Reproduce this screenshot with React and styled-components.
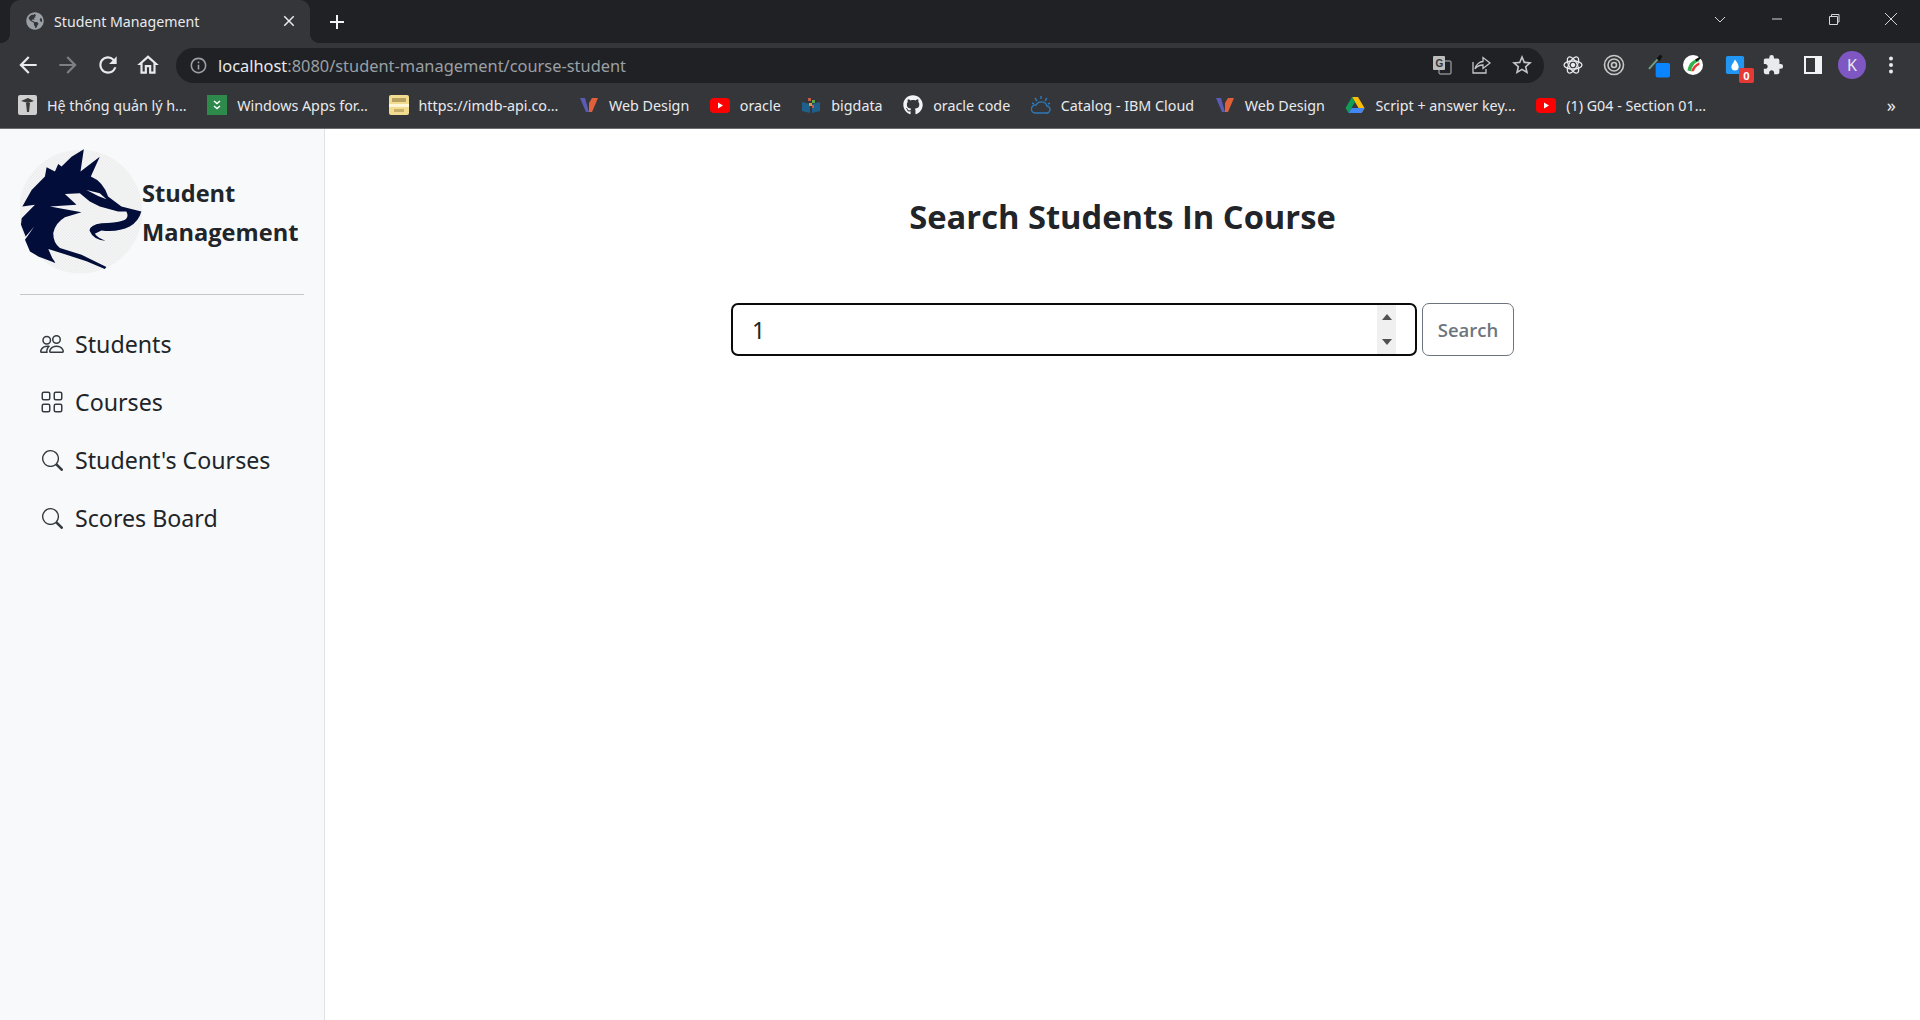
import React from "react";
import styled, { createGlobalStyle } from "styled-components";
import { BsPeople, BsGrid, BsSearch } from "react-icons/bs";
import {
  MdArrowBack,
  MdArrowForward,
  MdRefresh,
  MdOutlineHome,
  MdClose,
  MdAdd,
  MdInfoOutline,
  MdStarBorder,
  MdExtension,
} from "react-icons/md";
import { FaGithub, FaGlobeAmericas } from "react-icons/fa";

const GlobalStyle = createGlobalStyle`
  html, body { margin: 0; padding: 0; height: 100%; background: #fff; }
  body { font-family: "Noto Sans", "Open Sans", sans-serif; overflow: hidden; }
`;

const Page = styled.div`
  display: flex;
  flex-direction: column;
  height: 1020px;
`;

const TabStrip = styled.div`
  display: flex;
  align-items: flex-end;
  height: 43px;
  background: #202124;
  padding-left: 10px;
`;
const Tab = styled.div`
  position: relative;
  display: flex;
  align-items: center;
  width: 300px;
  height: 43px;
  box-sizing: border-box;
  padding: 0 12px 1px 16px;
  background: #35363a;
  border-radius: 10px 10px 0 0;
  color: #e8eaed;
  font-size: 14.2px;
  &::before,
  &::after {
    content: "";
    position: absolute;
    bottom: 0;
    width: 10px;
    height: 10px;
  }
  &::before {
    left: -10px;
    background: radial-gradient(circle at 0 0, #202124 10px, #35363a 10.5px);
  }
  &::after {
    right: -10px;
    background: radial-gradient(circle at 100% 0, #202124 10px, #35363a 10.5px);
  }
`;
const TabTitle = styled.span`
  flex: 1;
  margin-left: 10px;
`;
const NewTab = styled.div`
  display: flex;
  align-items: center;
  justify-content: center;
  width: 26px;
  height: 42px;
  margin-left: 14px;
  color: #f1f3f4;
  font-size: 24px;
`;
const WindowControls = styled.div`
  display: flex;
  align-items: center;
  gap: 43px;
  margin-left: auto;
  height: 37px;
  padding-bottom: 6px;
  padding-right: 22px;
  color: #d5d6d8;
`;

const ToolBar = styled.div`
  display: flex;
  align-items: center;
  height: 42px;
  box-sizing: border-box;
  background: #35363a;
  padding: 2px 0 0 15px;
  color: #e8eaed;
`;
const NavIcons = styled.div`
  display: flex;
  gap: 14px;
  align-items: center;
  font-size: 26px;
`;
const NavIcon = styled.span`
  display: flex;
  color: ${(p) => (p.$muted ? "#7d7f83" : "#e8eaed")};
`;
const UrlBar = styled.div`
  display: flex;
  align-items: center;
  width: 1368px;
  height: 35px;
  margin-left: 15px;
  padding: 0 10px 0 13px;
  box-sizing: border-box;
  border-radius: 18px;
  background: #202124;
  font-size: 16.4px;
  color: #9aa0a6;
`;
const UrlHost = styled.span`
  color: #e8eaed;
  margin-left: 10px;
`;
const UrlActions = styled.div`
  display: flex;
  align-items: center;
  gap: 18px;
  margin-left: auto;
  color: #c4c7c9;
`;
const Extensions = styled.div`
  display: flex;
  align-items: center;
  margin-left: 18px;
`;
const Avatar = styled.div`
  width: 28px;
  height: 28px;
  margin-left: 14px;
  border-radius: 50%;
  background: #7e57c2;
  color: #e8eaed;
  font-size: 16px;
  display: flex;
  align-items: center;
  justify-content: center;
`;
const Badge = styled.span`
  position: absolute;
  right: -8px;
  bottom: -7px;
  width: 15px;
  height: 15px;
  border-radius: 2px;
  background: #e53935;
  color: #fff;
  font-size: 11px;
  font-weight: 700;
  line-height: 15px;
  text-align: center;
`;
const ExtIcon = styled.span`
  position: relative;
  display: flex;
  flex: none;
  width: 22px;
  height: 22px;
  margin-left: ${(p) => p.$gap || 0}px;
  align-items: center;
  justify-content: center;
  color: #e8eaed;
`;

const BookmarkBar = styled.div`
  display: flex;
  align-items: center;
  height: 44px;
  box-sizing: border-box;
  padding: 0 24px 3px 17px;
  background: #35363a;
  border-bottom: 1px solid #6b6c6f;
  color: #e8eaed;
  font-size: 14.3px;
`;
const Bookmark = styled.div`
  display: flex;
  align-items: center;
  gap: 10px;
  margin-right: 20.6px;
  white-space: nowrap;
`;
const BookmarkGlyph = styled.span`
  display: flex;
  width: 20px;
  height: 20px;
  align-items: center;
  justify-content: center;
`;
const Overflow = styled.span`
  margin-left: auto;
  font-size: 18px;
`;

const Body = styled.div`
  display: flex;
  flex: 1;
`;
const Sidebar = styled.aside`
  width: 325px;
  box-sizing: border-box;
  background: #f8f9fa;
  border-right: 1px solid #dee2e6;
  padding: 19px 20px 0;
`;
const Brand = styled.div`
  display: flex;
  align-items: center;
  height: 127px;
`;
const BrandTitle = styled.div`
  font-family: "Open Sans", sans-serif;
  font-weight: 700;
  font-size: 23.6px;
  line-height: 39px;
  padding-top: 3px;
  margin-left: -1px;
  color: #212529;
`;
const Rule = styled.hr`
  border: 0;
  border-top: 1px solid #c5c7c9;
  margin: 19px 0 29px;
`;
const NavList = styled.nav`
  display: flex;
  flex-direction: column;
  gap: 18px;
  padding-left: 20px;
`;
const NavItem = styled.a`
  display: flex;
  align-items: center;
  gap: 11px;
  height: 40px;
  font-size: 23.2px;
  color: #212529;
`;
const NavGlyph = styled.span`
  display: flex;
  width: 24px;
  align-items: center;
  justify-content: center;
  color: #343a40;
  font-size: ${(p) => p.$size}px;
`;

const Main = styled.main`
  flex: 1;
  display: flex;
  flex-direction: column;
  align-items: center;
  padding-top: 65px;
`;
const Heading = styled.h1`
  margin: 0;
  font-family: "Open Sans", sans-serif;
  font-size: 32.7px;
  line-height: 46px;
  font-weight: 700;
  color: #212529;
`;
const SearchForm = styled.form`
  display: flex;
  gap: 5px;
  margin-top: 63px;
  height: 53px;
`;
const InputBox = styled.div`
  display: flex;
  width: 686px;
  box-sizing: border-box;
  border: 2px solid #0b0b0b;
  border-radius: 7px;
  padding-right: 19px;
  background: #fff;
`;
const NumberInput = styled.input`
  flex: 1;
  border: 0;
  outline: 0;
  padding: 0 0 0 19px;
  font: 23px "Noto Sans", sans-serif;
  color: #212529;
  background: transparent;
`;
const Spinner = styled.div`
  display: flex;
  flex-direction: column;
  justify-content: space-between;
  align-items: center;
  width: 19px;
  padding: 9px 0;
  box-sizing: border-box;
  background: #f0f0f0;
`;
const Arrow = styled.span`
  width: 0;
  height: 0;
  border-left: 5.5px solid transparent;
  border-right: 5.5px solid transparent;
  border-${(p) => (p.$down ? "top" : "bottom")}: 6px solid #505050;
`;
const SearchButton = styled.button`
  width: 92px;
  border: 1px solid #6c757d;
  border-radius: 7px;
  background: #fff;
  color: #6c757d;
  font: 600 18.5px "Open Sans", sans-serif;
  padding: 0;
`;

// traced over the logo at 3x
const Wolf = () => (
  <svg width="123" height="127" viewBox="15 15 370 380" style={{ flex: "none" }}>
    <defs>
      <pattern id="chk" width="9" height="9" patternUnits="userSpaceOnUse">
        <rect width="4.5" height="4.5" fill="#e9e9ea" />
        <rect x="4.5" y="4.5" width="4.5" height="4.5" fill="#e9e9ea" />
      </pattern>
    </defs>
    <circle cx="197" cy="205" r="186" fill="url(#chk)" />
    <path
      fill="#020d3a"
      d="M207 18 L197 85 L255 40 L228 100 Q265 115 280 160 L320 190 L380 205 Q372 235 345 250 Q310 268 260 262 L240 272 Q250 285 272 293 Q235 290 224 262 Q225 245 260 240 Q300 240 325 232 Q345 225 335 205 L310 205 L255 190 L225 175 L195 150 L150 152 L185 185 L105 190 L200 207 L150 222 Q120 240 115 270 Q115 300 135 315 L200 335 L275 372 L270 378 L215 355 L155 335 L100 318 L112 345 L122 360 L70 340 L45 325 L30 290 L58 250 L32 280 L18 245 L20 225 L60 185 L22 190 L50 140 L90 100 L95 72 L120 85 L130 62 L140 70 L170 40 Z"
    />
    <path fill="#f4f5f7" d="M215 140 L255 150 L275 168 L250 158 Z" />
  </svg>
);

const YouTube = () => (
  <svg width="20" height="15" viewBox="0 0 20 15">
    <rect width="20" height="15" rx="4" fill="#f00" />
    <path d="M8 4.5 L13 7.5 L8 10.5 Z" fill="#fff" />
  </svg>
);

const WebDesign = () => (
  <svg width="20" height="18" viewBox="0 0 20 18">
    <path d="M1 2 L6 2 L10 16 L7 16 Z" fill="#5b5bb5" />
    <path d="M10 7 L13 2 L19 2 L13 16 L10 16 Z" fill="#e0603a" />
  </svg>
);

const bookmarks = [
  {
    name: "Hệ thống quản lý h...",
    icon: (
      <svg width="19" height="20" viewBox="0 0 19 20">
        <rect width="19" height="20" rx="2" fill="#cfcfcf" />
        <path d="M3 6 L10 3 L16 6 L10 8 Z M8 8 L12 8 L11 17 L9 17 Z" fill="#3a3a3a" />
      </svg>
    ),
  },
  {
    name: "Windows Apps for...",
    icon: (
      <svg width="20" height="20" viewBox="0 0 20 20">
        <rect width="20" height="20" fill="#2d8a4b" />
        <path d="M7 6 L10 8.5 L13 6 M7 11 L10 13.5 L13 11" stroke="#fff" strokeWidth="1.6" fill="none" />
      </svg>
    ),
  },
  {
    name: "https://imdb-api.co...",
    icon: (
      <svg width="20" height="20" viewBox="0 0 20 20">
        <rect width="20" height="20" rx="2" fill="#f2dc8f" />
        <rect y="9" width="20" height="3" fill="#fff6d8" />
        <rect x="3" y="3" width="14" height="4" fill="#b8a060" />
        <rect x="5" y="14" width="10" height="3" fill="#c9b06a" />
      </svg>
    ),
  },
  { name: "Web Design", icon: <WebDesign /> },
  { name: "oracle", icon: <YouTube /> },
  {
    name: "bigdata",
    icon: (
      <svg width="20" height="18" viewBox="0 0 20 18">
        <path d="M1 6 L9 8 V17 L1 15 Z M19 6 L11 8 V17 L19 15 Z" fill="#1f5f8b" />
        <rect x="7" y="2" width="3" height="3" fill="#c65a4a" />
        <rect x="11" y="4" width="3" height="3" fill="#5aa84a" />
        <rect x="8" y="7" width="3" height="3" fill="#d9a03a" />
        <rect x="11" y="9" width="2" height="3" fill="#c65a4a" />
      </svg>
    ),
  },
  { name: "oracle code", icon: <FaGithub size={20} color="#f1f3f4" /> },
  {
    name: "Catalog - IBM Cloud",
    icon: (
      <svg width="20" height="20" viewBox="0 0 20 20" fill="none" stroke="#2f78b7" strokeWidth="1.4">
        <path d="M4 18 H15 A3.5 3.5 0 0 0 16 11 A6 6 0 0 0 5 10 A4 4 0 0 0 4 18 Z" />
        <path d="M4 3 L6 6 M10 1 L10 4 M16 3 L14 6 M1 8 L3 9 M19 8 L17 9" />
      </svg>
    ),
  },
  { name: "Web Design", icon: <WebDesign /> },
  {
    name: "Script + answer key...",
    icon: (
      <svg width="20" height="18" viewBox="0 0 20 18">
        <path d="M7 1 L13 1 L19.5 12 L16.5 17 Z" fill="#fbbc04" />
        <path d="M7 1 L0.5 12 L3.5 17 L10 6 Z" fill="#0f9d58" />
        <path d="M3.5 17 L16.5 17 L19.5 12 L6.5 12 Z" fill="#4285f4" />
      </svg>
    ),
  },
  { name: "(1) G04 - Section 01...", icon: <YouTube /> },
];

const nav = [
  { label: "Students", Icon: BsPeople, size: 24 },
  { label: "Courses", Icon: BsGrid, size: 26 },
  { label: "Student's Courses", Icon: BsSearch, size: 21 },
  { label: "Scores Board", Icon: BsSearch, size: 21 },
];

export default function App() {
  return (
    <Page>
      <GlobalStyle />
      <TabStrip>
        <Tab>
          <FaGlobeAmericas size={18} color="#9aa0a6" />
          <TabTitle>Student Management</TabTitle>
          <MdClose size={18} />
        </Tab>
        <NewTab>
          <MdAdd />
        </NewTab>
        <WindowControls>
          <svg width="14" height="14" viewBox="0 0 14 14"><path d="M2 5 L7 10 L12 5" fill="none" stroke="currentColor" /></svg>
          <svg width="14" height="14" viewBox="0 0 14 14"><path d="M2 7 H12" stroke="currentColor" /></svg>
          <svg width="14" height="14" viewBox="0 0 14 14"><path d="M2.5 4.5 H10.5 V12.5 H2.5 Z M4.5 4.5 V2.5 H12 V10 H10.5" fill="none" stroke="currentColor" /></svg>
          <svg width="14" height="14" viewBox="0 0 14 14"><path d="M1 1 L13 13 M13 1 L1 13" stroke="currentColor" /></svg>
        </WindowControls>
      </TabStrip>
      <ToolBar>
        <NavIcons>
          <NavIcon><MdArrowBack /></NavIcon>
          <NavIcon $muted><MdArrowForward /></NavIcon>
          <NavIcon><MdRefresh /></NavIcon>
          <NavIcon><MdOutlineHome /></NavIcon>
        </NavIcons>
        <UrlBar>
          <MdInfoOutline size={19} />
          <UrlHost>localhost</UrlHost>:8080/student-management/course-student
          <UrlActions>
            <svg width="20" height="20" viewBox="0 0 20 20">
              <rect x="7" y="6" width="12" height="13" rx="1" fill="#202124" stroke="#bdbdbd" />
              <rect x="1" y="1" width="12" height="14" rx="1" fill="#bdbdbd" />
              <text x="3.5" y="12" fontSize="10" fontWeight="700" fontFamily="Liberation Sans, sans-serif" fill="#333">G</text>
            </svg>
            <svg width="22" height="22" viewBox="0 0 22 22" fill="none" stroke="currentColor" strokeWidth="1.3">
              <path d="M3 8 V19 H16 V15" />
              <path d="M5 15 C6 10 10 7.5 13 7.5 V3.5 L20 9 L13 14.5 V11 C10 11 7 12 5 15 Z" />
            </svg>
            <MdStarBorder size={24} />
          </UrlActions>
        </UrlBar>
        <Extensions>
          <ExtIcon>
            <svg width="22" height="22" viewBox="-11 -11 22 22" fill="none" stroke="#e8eaed" strokeWidth="1.3">
              <ellipse rx="9" ry="4" />
              <ellipse rx="9" ry="4" transform="rotate(60)" />
              <ellipse rx="9" ry="4" transform="rotate(120)" />
              <circle r="1.6" fill="#e8eaed" />
            </svg>
          </ExtIcon>
          <ExtIcon $gap={19}>
            <svg width="22" height="22" viewBox="-11 -11 22 22" fill="none" stroke="#c8c8c8" strokeWidth="1.6">
              <circle r="9.5" />
              <circle r="6" />
              <circle r="2.5" />
            </svg>
          </ExtIcon>
          <ExtIcon $gap={23}>
            <svg width="23" height="25" viewBox="0 0 23 25">
              <path d="M1 16 L10 6" stroke="#6fa088" strokeWidth="2" />
              <path d="M9 5 L13 1 L15 3 L12 8 Z" fill="#111" />
              <rect x="8" y="10" width="15" height="15" rx="2" fill="#0a84ff" />
            </svg>
          </ExtIcon>
          <ExtIcon $gap={12}>
            <svg width="20" height="20" viewBox="0 0 22 22">
              <circle cx="11" cy="11" r="11" fill="#fff" />
              <path d="M5 17 C6 9 11 5 17 4 L18 7 C13 8 10 12 9 18 Z" fill="#31b24b" />
              <path d="M9 18 C10 14 13 10 18 8 L18 11 C15 12 13 15 12 18 Z" fill="#e53935" />
              <path d="M14 6 L19 3" stroke="#111" strokeWidth="2.4" />
            </svg>
          </ExtIcon>
          <ExtIcon $gap={20}>
            <svg width="20" height="20" viewBox="0 0 22 22">
              <rect x="1" y="1" width="20" height="20" rx="2" fill="#2196f3" />
              <path d="M11 5 C14 9 15 11 15 13 A4 4 0 0 1 7 13 C7 11 9 9 11 5 Z" fill="#fff" />
            </svg>
            <Badge>0</Badge>
          </ExtIcon>
          <ExtIcon $gap={16}><MdExtension size={22} /></ExtIcon>
          <ExtIcon $gap={18}>
            <svg width="18" height="18" viewBox="0 0 18 18">
              <path d="M0 0 H18 V18 H0 Z M2 2 V16 H11 V2 Z" fill="#f1f3f4" fillRule="evenodd" />
            </svg>
          </ExtIcon>
          <Avatar>K</Avatar>
          <ExtIcon $gap={14}>
            <svg width="6" height="20" viewBox="0 0 6 20" fill="#e8eaed">
              <circle cx="3" cy="3.5" r="2" />
              <circle cx="3" cy="10" r="2" />
              <circle cx="3" cy="16.5" r="2" />
            </svg>
          </ExtIcon>
        </Extensions>
      </ToolBar>
      <BookmarkBar>
        {bookmarks.map((b, i) => (
          <Bookmark key={i}>
            <BookmarkGlyph>{b.icon}</BookmarkGlyph>
            {b.name}
          </Bookmark>
        ))}
        <Overflow>»</Overflow>
      </BookmarkBar>
      <Body>
        <Sidebar>
          <Brand>
            <Wolf />
            <BrandTitle>Student<br />Management</BrandTitle>
          </Brand>
          <Rule />
          <NavList>
            {nav.map(({ label, Icon, size }) => (
              <NavItem key={label}>
                <NavGlyph $size={size}><Icon /></NavGlyph>
                {label}
              </NavItem>
            ))}
          </NavList>
        </Sidebar>
        <Main>
          <Heading>Search Students In Course</Heading>
          <SearchForm onSubmit={(e) => e.preventDefault()}>
            <InputBox>
              <NumberInput defaultValue="1" />
              <Spinner>
                <Arrow />
                <Arrow $down />
              </Spinner>
            </InputBox>
            <SearchButton type="button">Search</SearchButton>
          </SearchForm>
        </Main>
      </Body>
    </Page>
  );
}
